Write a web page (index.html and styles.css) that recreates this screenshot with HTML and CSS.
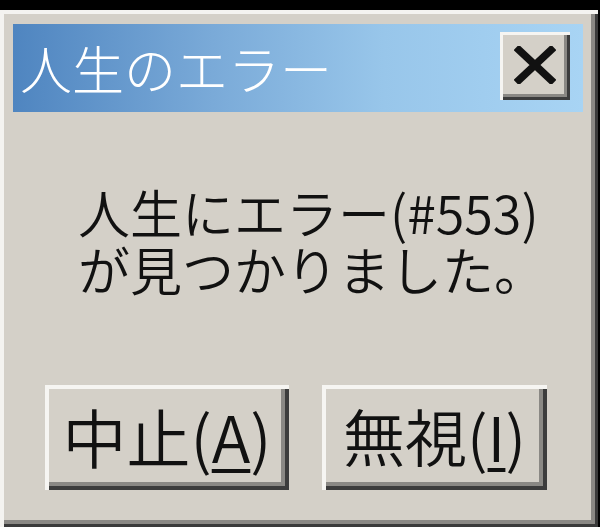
FILE: index.html
```html
<!DOCTYPE html>
<html lang="ja">
<head>
<meta charset="utf-8">
<title>人生のエラー</title>
<link rel="stylesheet" href="styles.css">
</head>
<body>
<div class="dialog">
  <div class="titlebar">
    <span class="title">人生のエラー</span>
    <div class="close">
      <svg width="42" height="38" viewBox="0 0 42 38" aria-hidden="true">
        <path d="M5 4 L37 34 M37 4 L5 34" stroke="#111" stroke-width="7.5" stroke-linecap="square" fill="none"/>
      </svg>
    </div>
  </div>
  <div class="message">
    <div class="line">人生にエラー(#553)</div>
    <div class="line">が見つかりました。</div>
  </div>
  <div class="buttons">
    <div class="btn btn-abort">中止(<span class="ul">A</span>)</div>
    <div class="btn btn-ignore">無視(<span class="ul">I</span>)</div>
  </div>
</div>
</body>
</html>
```

FILE: styles.css
```css
html, body {
  margin: 0;
  padding: 0;
  background: #000;
  width: 600px;
  height: 527px;
  overflow: hidden;
}

.dialog {
  margin-top: 10px;
  width: 598px;
  height: 517px;
  box-sizing: border-box;
  padding: 14px 15px 0 13px;
  background: #d4d0c8;
  box-shadow:
    inset 4px 4px 0 #f4f3f0,
    inset -3px -3px 0 #3a3a3a,
    inset -7px -7px 0 #8a8884;
  font-family: "Noto Sans CJK JP", "Noto Sans", sans-serif;
}

.titlebar {
  height: 88px;
  display: flex;
  align-items: flex-start;
  justify-content: space-between;
  background: linear-gradient(to right, #4f85c0 0%, #7aaad8 35%, #98c6ea 65%, #a8d4f4 100%);
}

.title {
  color: #fff;
  font-size: 52px;
  line-height: 88px;
  padding-left: 7px;
  font-weight: 300;
}

.close {
  margin-top: 8px;
  margin-right: 13px;
  width: 70px;
  height: 68px;
  box-sizing: border-box;
  background: #d4d0c8;
  display: flex;
  align-items: center;
  justify-content: center;
  padding-bottom: 2px;
  box-shadow:
    inset 3px 3px 0 #f6f5f2,
    inset -3px -3px 0 #3c3c3c,
    inset -6px -6px 0 #8a8884;
}

.message {
  margin-top: 71px;
  padding-left: 65px;
  font-size: 52px;
  color: #111;
  font-weight: 350;
}

.line {
  height: 57px;
  line-height: 57px;
  overflow: visible;
  white-space: nowrap;
}

.buttons {
  margin-top: 88px;
  padding-left: 32px;
  display: flex;
  gap: 33px;
}

.btn {
  height: 105px;
  box-sizing: border-box;
  display: flex;
  align-items: center;
  justify-content: center;
  color: #111;
  background: #d4d0c8;
  padding-bottom: 6px;
  font-weight: 350;
  box-shadow:
    inset 4px 4px 0 #f6f5f2,
    inset -4px -4px 0 #3c3c3c,
    inset -8px -8px 0 #8a8884;
}

.btn-abort {
  width: 244px;
  font-size: 64px;
}

.btn-ignore {
  width: 225px;
  font-size: 62px;
}

.ul {
  text-decoration: underline;
  text-decoration-thickness: 4px;
  text-underline-offset: 6px;
}
```
